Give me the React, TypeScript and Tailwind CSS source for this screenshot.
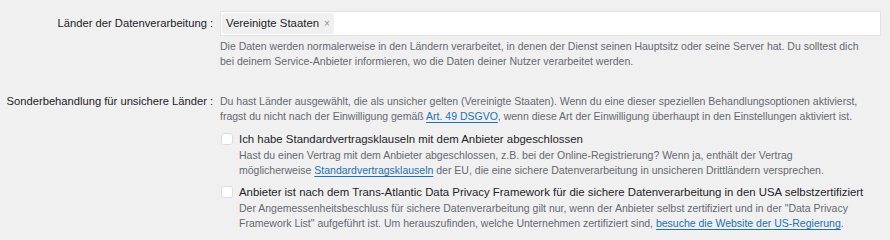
function Checkbox() {
  return <span className="mt-[1px] block h-[12px] w-[12px] shrink-0 rounded-[3px] border border-[#dcdcde] bg-white" />;
}

function Label({ children }: { children: string }) {
  return (
    <div className="flex items-center justify-end whitespace-nowrap text-[11.2px] text-[#1d2327]">
      {children}
      <span className="ml-[3px]">:</span>
    </div>
  );
}

const link = "text-[#2271b1] underline underline-offset-[2px]";

export default function App() {
  return (
    <div
      className="h-[240px] w-[890px] overflow-hidden bg-[#f0f0f0] pr-[9px] pt-[11px]"
      style={{ fontFamily: '"Liberation Sans", Arial, sans-serif' }}
    >
      <div className="grid grid-cols-[213px_1fr] gap-x-[7px]">
        {/* Länder der Datenverarbeitung */}
        <div className="flex h-[25px] items-center justify-end">
          <Label>Länder der Datenverarbeitung</Label>
        </div>
        <div>
          <div className="flex h-[25px] items-center border border-[#e2e2e2] bg-white px-[1px]">
            <span className="flex h-[21px] items-center gap-[5px] rounded-[2px] bg-[#f0f0f0] px-[4px] text-[11.4px] text-[#1d2327]">
              Vereinigte Staaten
              <span className="text-[10px] text-[#8c8f94]">×</span>
            </span>
          </div>
          <p className="mt-[3px] whitespace-nowrap text-[10.5px] leading-[15px] text-[#646970]">
            Die Daten werden normalerweise in den Ländern verarbeitet, in denen der Dienst seinen Hauptsitz oder seine Server hat. Du solltest dich
            <br />
            bei deinem Service-Anbieter informieren, wo die Daten deiner Nutzer verarbeitet werden.
          </p>
        </div>

        {/* Sonderbehandlung */}
        <div className="mt-[25px] flex h-[15px] items-center justify-end">
          <Label>Sonderbehandlung für unsichere Länder</Label>
        </div>
        <div className="mt-[25px]">
          <p className="whitespace-nowrap text-[10.5px] leading-[15px] text-[#646970]">
            Du hast Länder ausgewählt, die als unsicher gelten (Vereinigte Staaten). Wenn du eine dieser speziellen Behandlungsoptionen aktivierst,
            <br />
            fragst du nicht nach der Einwilligung gemäß <span className={link}>Art. 49 DSGVO</span>, wenn diese Art der Einwilligung überhaupt in den Einstellungen aktiviert ist.
          </p>

          <div className="mt-[8px] flex gap-[6px] pl-[1px]">
            <Checkbox />
            <div>
              <div className="whitespace-nowrap text-[11.4px] leading-[15px] text-[#1d2327]">
                Ich habe Standardvertragsklauseln mit dem Anbieter abgeschlossen
              </div>
              <p className="mt-[1px] whitespace-nowrap text-[10.5px] leading-[15px] text-[#646970]">
                Hast du einen Vertrag mit dem Anbieter abgeschlossen, z.B. bei der Online-Registrierung? Wenn ja, enthält der Vertrag
                <br />
                möglicherweise <span className={link}>Standardvertragsklauseln</span> der EU, die eine sichere Datenverarbeitung in unsicheren Drittländern versprechen.
              </p>
            </div>
          </div>

          <div className="mt-[7px] flex gap-[6px] pl-[1px]">
            <Checkbox />
            <div>
              <div className="whitespace-nowrap text-[11.4px] leading-[15px] text-[#1d2327]">
                Anbieter ist nach dem Trans-Atlantic Data Privacy Framework für die sichere Datenverarbeitung in den USA selbstzertifiziert
              </div>
              <p className="mt-[1px] whitespace-nowrap text-[10.5px] leading-[15px] text-[#646970]">
                Der Angemessenheitsbeschluss für sichere Datenverarbeitung gilt nur, wenn der Anbieter selbst zertifiziert und in der "Data Privacy
                <br />
                Framework List" aufgeführt ist. Um herauszufinden, welche Unternehmen zertifiziert sind, <span className={link}>besuche die Website der US-Regierung</span>.
              </p>
            </div>
          </div>
        </div>
      </div>
    </div>
  );
}
